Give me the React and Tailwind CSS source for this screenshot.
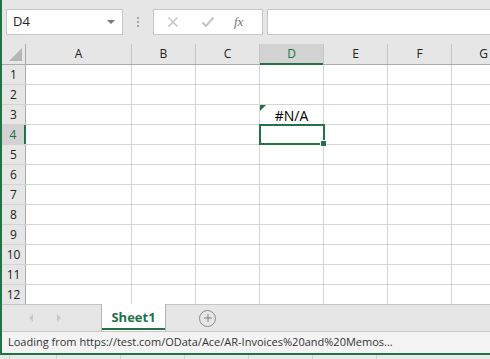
import { Plus } from 'lucide-react';

const cols = [
  { key: 'A', w: 'w-[106px]' },
  { key: 'B', w: 'w-[64px]' },
  { key: 'C', w: 'w-[64px]' },
  { key: 'D', w: 'w-[64px]' },
  { key: 'E', w: 'w-[64px]' },
  { key: 'F', w: 'w-[64px]' },
  { key: 'G', w: 'w-[64px]' },
];

const rows = [1, 2, 3, 4, 5, 6, 7, 8, 9, 10, 11, 12];

function Cell({ col, row }) {
  const isError = col === 'D' && row === 3;
  const isActive = col === 'D' && row === 4;
  return (
    <div className={`${cols.find(c => c.key === col).w} shrink-0 h-full border-r border-[#d4d4d4] relative bg-white`}>
      {isError && (
        <>
          <div className="absolute left-0 top-0 w-0 h-0 border-t-[6px] border-r-[6px] border-t-[#217346] border-r-transparent" />
          <div className="h-full flex items-end justify-center pb-[1px] text-[14px] leading-none text-black">#N/A</div>
        </>
      )}
      {isActive && (
        <div className="absolute -left-[1px] -top-[1px] w-[66px] h-[21px] border-2 border-[#217346] z-10">
          <div className="absolute -right-[4px] -bottom-[4px] w-[5px] h-[5px] bg-[#217346] border border-white box-content" />
        </div>
      )}
    </div>
  );
}

export default function App() {
  return (
    <div className="w-[490px] h-[359px] overflow-hidden bg-[#e9e9e9] relative" style={{ fontFamily: '"Open Sans", "Liberation Sans", sans-serif' }}>
      <div className="h-[355px] border-l-2 border-b-2 border-[#217346] flex flex-col">
        {/* Formula bar */}
        <div className="h-[44px] shrink-0 bg-[#e6e6e6] flex items-start pt-[9px] pl-[4px]">
          <div className="w-[117px] h-[26px] bg-white border border-[#c6c6c6] flex items-center justify-between pl-[6px] pr-[7px]">
            <span className="text-[13px] text-[#222]">D4</span>
            <span className="w-0 h-0 border-l-[4px] border-r-[4px] border-t-[4px] border-l-transparent border-r-transparent border-t-[#777]" />
          </div>
          <div className="w-[30px] h-[26px] flex flex-col items-center justify-center gap-[2px]">
            <span className="w-[2px] h-[2px] bg-[#a6a6a6]" />
            <span className="w-[2px] h-[2px] bg-[#a6a6a6]" />
            <span className="w-[2px] h-[2px] bg-[#a6a6a6]" />
          </div>
          <div className="w-[110px] h-[26px] bg-white border border-[#c6c6c6] flex items-center">
            <svg width="12" height="12" viewBox="0 0 12 12" className="ml-[13px]">
              <path d="M1.5 1.5 L10.5 10.5 M10.5 1.5 L1.5 10.5" stroke="#c4c4c4" strokeWidth="1.6" fill="none" />
            </svg>
            <svg width="14" height="12" viewBox="0 0 14 12" className="ml-[22px]">
              <path d="M1.5 6.5 L5 10 L12.5 1.5" stroke="#c4c4c4" strokeWidth="2" fill="none" />
            </svg>
            <span className="ml-[19px] text-[13px] italic text-[#777]" style={{ fontFamily: '"Liberation Serif", serif' }}>fx</span>
          </div>
          <div className="ml-[4px] flex-1 h-[26px] bg-white border border-[#c6c6c6] border-r-0" />
        </div>

        {/* Column headers */}
        <div className="h-[21px] shrink-0 flex bg-[#e6e6e6] border-b border-[#ababab]">
          <div className="w-[24px] shrink-0 h-full border-r border-[#ababab] relative">
            <svg width="13" height="13" viewBox="0 0 13 13" className="absolute right-[3px] bottom-[3px]">
              <path d="M13 0 L13 13 L0 13 Z" fill="#b6b6b6" />
            </svg>
          </div>
          {cols.map(c => (
            <div
              key={c.key}
              className={`${c.w} shrink-0 h-full border-r border-[#c6c6c6] flex items-center justify-center text-[12px] ${
                c.key === 'D' ? 'bg-[#d2d2d2] text-[#217346] relative' : 'text-[#222]'
              }`}
            >
              {c.key}
              {c.key === 'D' && <div className="absolute left-0 right-0 -bottom-[1px] h-[2px] bg-[#217346]" />}
            </div>
          ))}
        </div>

        {/* Rows */}
        {rows.map(r => (
          <div key={r} className="h-[20px] shrink-0 flex border-b border-[#d4d4d4]">
            <div
              className={`w-[24px] shrink-0 h-full flex items-center justify-center text-[12px] relative ${
                r === 4 ? 'bg-[#d2d2d2] text-[#217346] border-r-2 border-[#217346]' : 'bg-[#e6e6e6] text-[#222] border-r border-[#ababab]'
              }`}
            >
              {r}
            </div>
            {cols.map(c => (
              <Cell key={c.key} col={c.key} row={r} />
            ))}
          </div>
        ))}

        {/* Sheet tabs */}
        <div className="h-[27px] shrink-0 flex items-stretch bg-[#e6e6e6] border-t border-[#c6c6c6] -mt-[1px]">
          <div className="w-[99px] shrink-0 flex items-center">
            <span className="ml-[27px] w-0 h-0 border-t-[4px] border-b-[4px] border-r-[4px] border-t-transparent border-b-transparent border-r-[#c8c8c8]" />
            <span className="ml-[24px] w-0 h-0 border-t-[4px] border-b-[4px] border-l-[4px] border-t-transparent border-b-transparent border-l-[#c8c8c8]" />
          </div>
          <div className="w-[65px] shrink-0 -mt-[1px] bg-white border-l border-r border-[#b4b4b4] relative flex items-center justify-center">
            <span className="text-[13px] font-bold text-[#217346]">Sheet1</span>
            <div className="absolute left-0 right-0 bottom-[1px] h-[2px] bg-[#217346]" />
          </div>
          <div className="ml-[33px] flex items-center">
            <div className="w-[17px] h-[17px] rounded-full border border-[#8a8a8a] flex items-center justify-center">
              <Plus size={12} strokeWidth={2} color="#7a7a7a" />
            </div>
          </div>
        </div>

        {/* Status bar */}
        <div className="flex-1 bg-[#f3f3f3] border-t border-[#c6c6c6] flex items-center pl-[6px]">
          <span className="text-[11px] text-[#333] whitespace-nowrap">Loading from https://test.com/OData/Ace/AR-Invoices%20and%20Memos...</span>
        </div>
      </div>
      <div className="h-[4px] flex">
        <div className="w-[10px] border-r border-[#cfcfcf]" />
        <div className="w-[47px] border-r border-[#cfcfcf]" />
        <div className="w-[64px] border-r border-[#cfcfcf]" />
        <div className="w-[64px] border-r border-[#cfcfcf]" />
        <div className="w-[64px] border-r border-[#cfcfcf]" />
        <div className="w-[64px] border-r border-[#cfcfcf]" />
        <div className="w-[64px] border-r border-[#cfcfcf]" />
      </div>
    </div>
  );
}
